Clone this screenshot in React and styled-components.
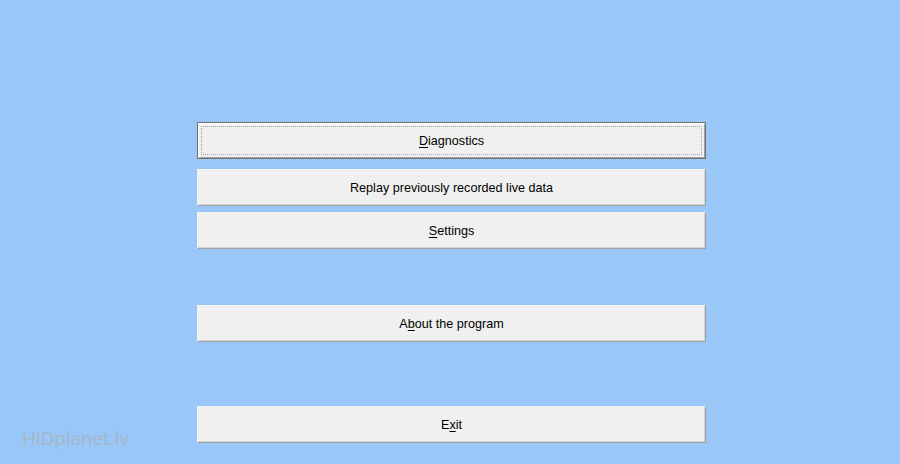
import React from "react";
import styled, { createGlobalStyle, css } from "styled-components";

const Global = createGlobalStyle`
  html, body { margin: 0; padding: 0; }
  body {
    background: #99c7f7;
    font-family: "Liberation Sans", Arial, sans-serif;
    width: 900px;
    height: 464px;
    overflow: hidden;
  }
`;

const Screen = styled.div`
  position: relative;
  width: 900px;
  height: 464px;
  background: #99c7f7;
  display: flex;
  flex-direction: column;
  align-items: flex-start;
  padding: 122px 0 0 197px;
  box-sizing: border-box;
`;

const Menu = styled.div`
  display: flex;
  flex-direction: column;
  width: 509px;
`;

const Button = styled.button`
  box-sizing: border-box;
  width: 509px;
  height: 37px;
  margin-top: ${(p) => p.$gap || 0}px;
  background: #f0f0f0;
  border: 1px solid;
  border-color: #f4f4f4 #a0a0a0 #a0a0a0 #f4f4f4;
  box-shadow: inset -1px -1px 0 #d4d4d4;
  font-family: "Liberation Sans", Arial, sans-serif;
  font-size: 12.6px;
  color: #000;
  padding: 0;
  display: flex;
  align-items: center;
  justify-content: center;
  position: relative;
  cursor: default;
  ${(p) =>
    p.$focused &&
    css`
      border: 1px solid #707070;
      box-shadow: inset 1px 1px 0 #ffffff, inset -1px -1px 0 #a0a0a0;
      &::after {
        content: "";
        position: absolute;
        inset: 3px;
        border: 1px dotted #a0a0a0;
      }
    `}
`;

const Key = styled.span`
  text-decoration: underline;
  text-underline-offset: 2px;
`;

const Watermark = styled.div`
  position: absolute;
  left: 22px;
  top: 425px;
  font-family: "Open Sans", "Noto Sans", sans-serif;
  font-size: 18.8px;
  color: #a6b6c6;
`;

export default function App() {
  return (
    <>
      <Global />
      <Screen>
        <Menu>
          <Button $focused>
            <span>
              <Key>D</Key>iagnostics
            </span>
          </Button>
          <Button $gap={10}>Replay previously recorded live data</Button>
          <Button $gap={6}>
            <span>
              <Key>S</Key>ettings
            </span>
          </Button>
          <Button $gap={56}>
            <span>
              A<Key>b</Key>out the program
            </span>
          </Button>
          <Button $gap={64}>
            <span>
              E<Key>x</Key>it
            </span>
          </Button>
        </Menu>
        <Watermark>HiDplanet.lv</Watermark>
      </Screen>
    </>
  );
}
